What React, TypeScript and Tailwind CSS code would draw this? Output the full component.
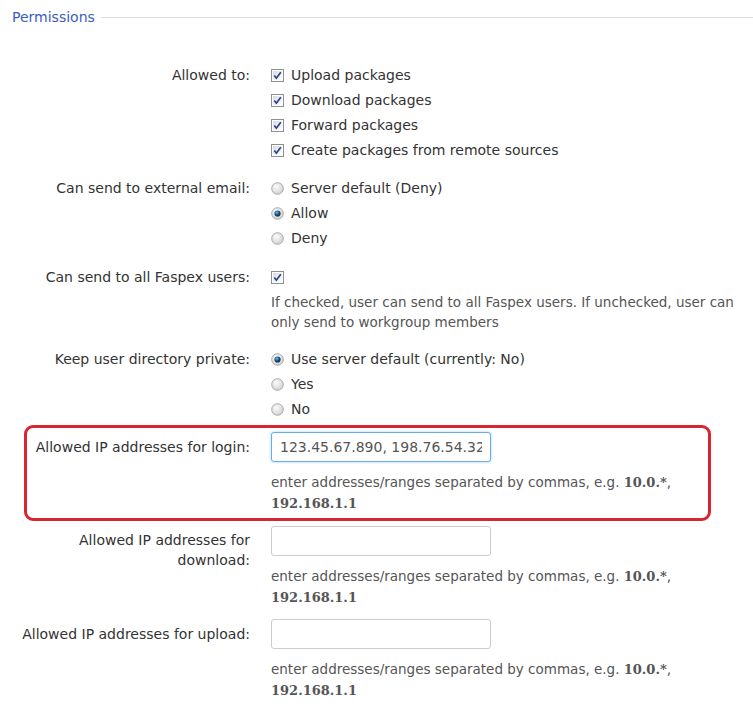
import type { ReactNode } from "react";

const font = { fontFamily: '"DejaVu Sans", Verdana, sans-serif' };
const serif = { fontFamily: '"DejaVu Serif", Georgia, serif' };

function CheckBox() {
  return (
    <svg width="13" height="13" viewBox="0 0 13 13" className="shrink-0">
      <defs>
        <linearGradient id="cbg" x1="0" y1="0" x2="1" y2="1">
          <stop offset="0" stopColor="#d8dbe3" />
          <stop offset="1" stopColor="#ffffff" />
        </linearGradient>
      </defs>
      <rect x="0.5" y="0.5" width="12" height="12" fill="#fff" stroke="#8e8f8f" />
      <rect x="2" y="2" width="9" height="9" fill="url(#cbg)" />
      <path d="M3.3 6.4 L5.4 9.2 L9.8 3.3" fill="none" stroke="#2b3f8d" strokeWidth="1.7" />
    </svg>
  );
}

function Radio({ checked }: { checked?: boolean }) {
  return (
    <svg width="13" height="13" viewBox="0 0 13 13" className="shrink-0">
      <defs>
        <radialGradient id="rbg" cx="0.4" cy="0.35" r="0.7">
          <stop offset="0" stopColor="#fbfbfb" />
          <stop offset="1" stopColor="#cfcfcf" />
        </radialGradient>
        <radialGradient id="rdot" cx="0.4" cy="0.35" r="0.7">
          <stop offset="0" stopColor="#5ec2f0" />
          <stop offset="0.55" stopColor="#16507e" />
          <stop offset="1" stopColor="#0b2238" />
        </radialGradient>
      </defs>
      <circle cx="6.5" cy="6.5" r="5.8" fill="url(#rbg)" stroke="#a3a3a3" strokeWidth="0.9" />
      {checked && <circle cx="6.5" cy="6.5" r="3.1" fill="url(#rdot)" />}
    </svg>
  );
}

function Option({ children, radio, checked }: { children: ReactNode; radio?: boolean; checked?: boolean }) {
  return (
    <div className="flex h-[25px] items-center gap-[7px]">
      {radio ? <Radio checked={checked} /> : <CheckBox />}
      <span>{children}</span>
    </div>
  );
}

function Row({ label, children, className = "" }: { label: string; children: ReactNode; className?: string }) {
  return (
    <div className={`grid grid-cols-[250px_1fr] gap-x-[21px] ${className}`}>
      <div className="text-right leading-[25px]">{label}</div>
      <div>{children}</div>
    </div>
  );
}

function Help() {
  return (
    <p className="mt-[10px] text-[13.5px] leading-[20px] text-[#555]">
      enter addresses/ranges separated by commas, e.g. <b className="text-[13px]" style={serif}>10.0.*</b>,
      <br />
      <b className="text-[13px]" style={serif}>192.168.1.1</b>
    </p>
  );
}

function IpInput({ value, focused }: { value?: string; focused?: boolean }) {
  return (
    <input
      readOnly
      value={value ?? ""}
      className={`block h-[30px] w-[220px] rounded-[3px] border bg-white px-[8px] text-[14px] text-[#555] outline-none ${
        focused ? "border-[#66afe9] shadow-[0_0_3px_rgba(102,175,233,0.6)]" : "border-[#cccccc]"
      }`}
      style={font}
    />
  );
}

export default function App() {
  return (
    <div className="h-[716px] w-[753px] overflow-hidden bg-white text-[14px] text-[#333]" style={font}>
      <div className="flex h-[35px] items-center gap-[6px] pl-[12px]">
        <span className="text-[#3b5cc6]">Permissions</span>
        <div className="h-px flex-1 bg-[#dddddd]" />
      </div>

      <div className="pt-[28px]">
        <Row label="Allowed to:">
          <Option>Upload packages</Option>
          <Option>Download packages</Option>
          <Option>Forward packages</Option>
          <Option>Create packages from remote sources</Option>
        </Row>

        <Row label="Can send to external email:" className="mt-[13px]">
          <Option radio>Server default (Deny)</Option>
          <Option radio checked>Allow</Option>
          <Option radio>Deny</Option>
        </Row>

        <Row label="Can send to all Faspex users:" className="mt-[14px]">
          <div className="flex h-[25px] items-center">
            <CheckBox />
          </div>
          <p className="mt-[2px] pr-[10px] text-[13.5px] leading-[20px] text-[#555]">
            If checked, user can send to all Faspex users. If unchecked, user can only send to workgroup members
          </p>
        </Row>

        <Row label="Keep user directory private:" className="mt-[15px]">
          <Option radio checked>Use server default (currently: No)</Option>
          <Option radio>Yes</Option>
          <Option radio>No</Option>
        </Row>

        <div className="ml-[24px] mr-[42px] mt-[3px] rounded-[9px] border-[3px] border-[#d7262f] pb-[4px] pt-[4px]">
          <div className="grid grid-cols-[223px_1fr] gap-x-[21px]">
            <div className="pt-[5px] text-right leading-[20px]">Allowed IP addresses for login:</div>
            <div>
              <IpInput value="123.45.67.890, 198.76.54.321" focused />
              <Help />
            </div>
          </div>
        </div>

        <div className="mt-[5px] grid grid-cols-[250px_1fr] gap-x-[21px]">
          <div className="pl-[70px] pt-[4px] text-right leading-[20px]">Allowed IP addresses for download:</div>
          <div>
            <IpInput />
            <Help />
          </div>
        </div>

        <div className="mt-[11px] grid grid-cols-[250px_1fr] gap-x-[21px]">
          <div className="pt-[5px] text-right leading-[20px]">Allowed IP addresses for upload:</div>
          <div>
            <IpInput />
            <Help />
          </div>
        </div>
      </div>
    </div>
  );
}
